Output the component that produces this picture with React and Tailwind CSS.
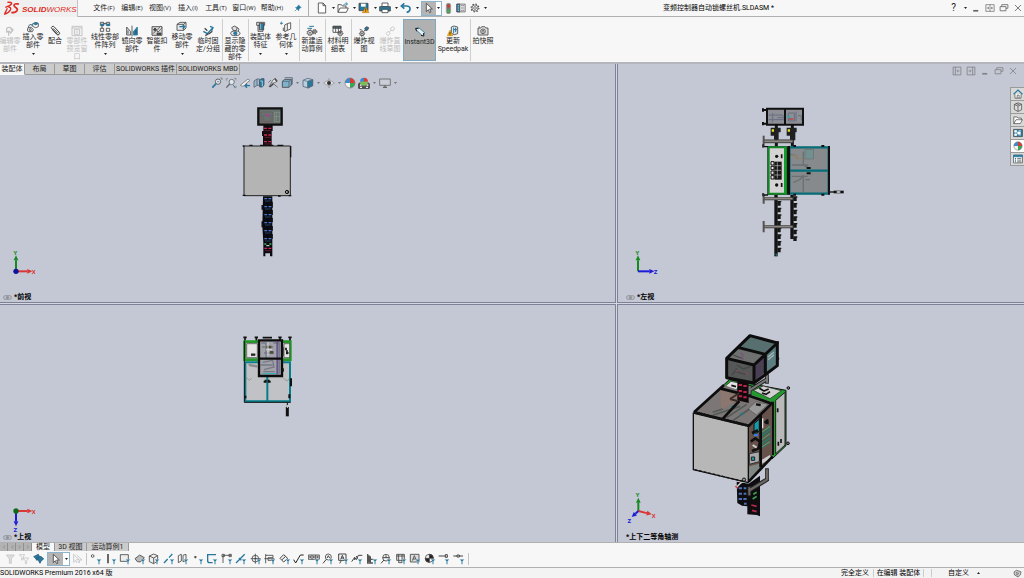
import React, { useState } from "react";

const BLUE = "#27789f";
const DARK = "#444";

/* ---------- icons (drawn on a 36 unit grid) ---------- */

function Icon({ children, className = "size-3" }) {
  return (
    <svg viewBox="0 0 36 36" className={`shrink-0 ${className}`} fill="none" stroke={DARK} strokeWidth="2.5" aria-hidden="true">
      {children}
    </svg>
  );
}

const gear = (x, y, r) => (
  <>
    <circle cx={x} cy={y} r={r} />
    <circle cx={x} cy={y} r={r + 2} strokeDasharray="3 3" />
    <circle cx={x} cy={y} r="2" />
  </>
);

const cursorPath = <path d="M10 4v25l6-6 4 9 4-2-4-9h8z" fill="#fff" />;

const icons = {
  edit: <path d="M8 10q8-6 14 0l5 5-7 9-4-5-8 2zM14 22v10M20 10l5 8" stroke="#c4c4c4" strokeWidth="4" />,
  insert: (
    <>
      <path d="M17 8l10-4 7 3v10l-8 3-9-4z" fill="#fff" />
      <path d="M19 8l8-3 6 3-7 4z" fill={BLUE} stroke={BLUE} />
      <path d="M4 20q0-9 8-10M3 20h11l5 6-3 6H4l-3-5z" />
      <circle cx="10" cy="26" r="3" />
      <path d="M12 10l4 2-4 4" stroke={BLUE} />
    </>
  ),
  mate: <path d="M26 29L9 12q-4-5 0-7 4-3 7 1l14 15q4 5 0 8-4 2-7-1L12 16q-2-4 1-5l14 14" strokeWidth="3" />,
  preview: <path d="M3 4h30v28H3zM3 9h30M10 14h16v14H10zM14 21h8" stroke="#c4c4c4" strokeWidth="3" />,
  pattern: (
    <>
      <path d="M4 4h10v9H4zM22 4h10v9H22zM4 22h10v9H4zM22 22h10v9H22z" />
      <path d="M6 9h8v5H6zM24 9h8v5h-8z" fill={BLUE} stroke={BLUE} />
      <path d="M14 8h8M9 14v8" strokeWidth="3" />
    </>
  ),
  mirror: (
    <>
      <path d="M2 6v24h12V20zM18 2v32" fill="#ddd" />
      <path d="M34 6v24H22V20z" fill={BLUE} stroke={BLUE} />
      <path d="M6 16v10M30 16v10" />
    </>
  ),
  smart: (
    <>
      <path d="M3 5h30v26H3z" fill="#d5d5d5" />
      <path d="M6 26l9-9M17 18l12-14 4 4-12 13z" fill="#fff" />
      <path d="M7 14l5-5 5 5-5 4zM18 24h12v5H18z" fill={DARK} />
    </>
  ),
  move: (
    <>
      <path d="M3 10l9-6h18v17l-7 7H3z" fill="#e8e8e8" />
      <path d="M3 10h20v18M23 10l7-6" />
      <path d="M10 17h14M20 12l6 5-6 6" stroke={BLUE} strokeWidth="4" />
    </>
  ),
  fix: (
    <>
      <path d="M4 19l12 7 16-17M24 4l9 4-4 9" stroke={BLUE} strokeWidth="4" />
      <path d="M8 10l8 7M19 28l12-9M10 32l8-5" strokeWidth="4" />
    </>
  ),
  hide: (
    <>
      <path d="M8 8l8-5 9 5-3 8-8 2z" fill="#ddd" />
      <ellipse cx="19" cy="25" rx="14" ry="7" fill="#eee" />
      <circle cx="19" cy="25" r="5" fill={BLUE} stroke={BLUE} />
      <path d="M23 7l7 5-2 6" />
    </>
  ),
  feature: (
    <>
      <path d="M5 4h24v9H5zM9 13v18h15V13" fill="#ddd" />
      <path d="M13 7h13v19H13z" fill={BLUE} stroke={DARK} />
      <path d="M17 8v17" stroke="#9cc5d9" />
    </>
  ),
  refgeo: (
    <>
      <path d="M14 12l8-4v20l-8 4zM22 8l10-3v19l-10 4" />
      <path d="M4 2v9M0 7h9" stroke={BLUE} />
      <path d="M10 20v10" />
    </>
  ),
  motion: (
    <>
      {gear(12, 23, 7)}
      {gear(26, 20, 5)}
      <path d="M4 10h14M10 4h14" stroke={BLUE} strokeWidth="3" />
    </>
  ),
  bom: (
    <>
      <path d="M3 4h24v18H3zM3 10h24M11 4v18M19 4v18" fill="#fff" />
      <path d="M3 4h24v4H3z" fill={BLUE} />
      {gear(25, 25, 6)}
    </>
  ),
  explode: (
    <>
      {gear(12, 26, 6)}
      <path d="M20 10l6-5 6 3-3 7-6 2z" fill={BLUE} />
      <path d="M17 20l4-5M5 13l8 3" />
    </>
  ),
  explodeOff: <path d="M6 26l6-7 7 6-6 7zM19 10l7-5 6 4-4 8-7-1zM16 21l6-6" stroke="#ccc" strokeWidth="3" />,
  instant: (
    <>
      <path d="M4 9l9-5 20 17-8 8z" fill="#e9f1f5" stroke={BLUE} />
      <path d="M5 7l3 9M5 7l9 1M30 30l-9-2M30 30l-2-9" stroke="#222" strokeWidth="3" />
    </>
  ),
  speedpak: (
    <>
      <path d="M13 6l8-3 11 3v20l-10 3-9-4z" fill="#dfeaf0" />
      <path d="M20 8v17M20 14h10M26 8v13" stroke={BLUE} strokeWidth="3" />
      <path d="M9 15l9 17H1z" fill="#f7b318" stroke="#b77705" strokeWidth="1.5" />
      <path d="M9 21v6M9 28v3" stroke="#222" />
    </>
  ),
  camera: (
    <>
      <path d="M3 9h8l3-4h9l3 4h7v21H3z" fill="#ddd" />
      <circle cx="18" cy="19" r="7" fill="#fff" />
      <circle cx="18" cy="19" r="3" />
      <path d="M5 6h4" />
    </>
  ),
  // quick access
  newDoc: <path d="M7 3h14l8 8v22H7zM21 3v8h8" fill="#fff" />,
  open: (
    <>
      <path d="M3 31V8h10l3 4h11v6M3 31l6-13h25l-6 13z" fill="#fff" />
      <path d="M18 11q4-8 12-5M26 1l6 5-6 4" stroke={BLUE} />
    </>
  ),
  save: (
    <>
      <path d="M3 4h27v22H3z" fill={BLUE} />
      <path d="M9 5h14v9H9z" fill="#fff" stroke="none" />
      <path d="M23 15l10 17H13z" fill="#f7a918" stroke="#a86b05" strokeWidth="1.5" />
      <path d="M23 20v6M23 28v2" stroke="#222" />
    </>
  ),
  print: (
    <>
      <path d="M9 3h18v11H9z" fill="#fff" />
      <path d="M2 14h32v13H2z" fill={BLUE} />
      <path d="M9 22h18v10H9z" fill="#fff" />
    </>
  ),
  undo: <path d="M13 4L4 12l9 8M5 12h16q10 1 9 10-1 7-10 9" stroke={BLUE} strokeWidth="5" />,
  cursor: cursorPath,
  light: (
    <>
      <rect x="11" y="1" width="14" height="34" rx="6" fill="#777" stroke="#999" />
      <circle cx="18" cy="10" r="5" fill="#d8352a" stroke="none" />
      <circle cx="18" cy="26" r="5" fill="#3bb54a" stroke="none" />
    </>
  ),
  list: (
    <>
      <path d="M3 4h30v28H3z" fill="#fff" />
      <path d="M3 4h11v28H3z" fill={BLUE} />
      <path d="M6 10h5M6 18h5M6 26h5" stroke="#fff" />
      <path d="M18 10h12M18 18h12M18 26h12" />
    </>
  ),
  gear: (
    <>
      <circle cx="18" cy="18" r="11" />
      <circle cx="18" cy="18" r="14" strokeDasharray="5 6" strokeWidth="4" />
      <circle cx="18" cy="18" r="5" />
    </>
  ),
  pin: (
    <>
      <path d="M20 4l12 12-4 1-6 7-1 6L7 16l6-1 6-7z" fill={BLUE} stroke={BLUE} />
      <path d="M13 23L4 32" stroke={BLUE} strokeWidth="3" />
    </>
  ),
  // heads-up view toolbar
  zoomFit: (
    <>
      <circle cx="21" cy="14" r="8" fill="#dde9f0" stroke="#666" strokeWidth="3" />
      <path d="M15 20L4 32" stroke={BLUE} strokeWidth="5" />
      <path d="M18 14h7M28 3h5v6" stroke="#777" />
    </>
  ),
  zoomArea: (
    <>
      <path d="M9 5H4v6M27 4h6v6M33 26v6h-6" stroke="#888" />
      <circle cx="20" cy="15" r="8" fill="#dde9f0" stroke="#777" strokeWidth="3" />
      <path d="M14 21L4 32" stroke="#666" strokeWidth="4" />
      <path d="M24 25l7 6" stroke={BLUE} strokeWidth="3" />
    </>
  ),
  prevView: (
    <>
      <path d="M4 25l9-8 14-11 6 4-8 6-9 10-6 2z" fill="#eee" stroke="#777" />
      <path d="M33 26H19M24 20l-6 6 6 6" stroke={BLUE} strokeWidth="4" />
    </>
  ),
  section: (
    <>
      <path d="M3 12l9-6v19l-9 6zM12 6h8v19h-8" fill="#9fb8c8" stroke="#567" />
      <path d="M20 10l5-5h8v19l-5 6h-8z" fill={BLUE} stroke="#456" />
      <path d="M22 12h6v16" stroke="#bdd9e6" />
    </>
  ),
  dynamic: (
    <>
      <path d="M6 30L18 9l7-5 5 6-4 6-11 3zM18 19l14 12M4 17l8-8" fill="#e8e8e8" stroke="#666" />
      <path d="M23 5l7 9M8 30l11-9" strokeWidth="4" />
    </>
  ),
  orient: (
    <>
      <path d="M4 13l7-6h20v17l-7 7H4z" fill="#7fb2cb" />
      <path d="M4 13h20v18M24 13l7-6M11 2h23v20" stroke="#567" />
    </>
  ),
  display: (
    <>
      <path d="M3 10l14-6 15 4v18l-14 7-15-5z" fill="#b5d2e0" stroke="#567" />
      <path d="M17 13l15-5v18l-15 7z" fill={BLUE} stroke="#567" />
      <path d="M3 10l14 3v20" stroke="#678" />
    </>
  ),
  eye: (
    <>
      <path d="M2 18q16-15 32 0-16 15-32 0z" fill="#dfe2e8" stroke="#999" />
      <circle cx="18" cy="18" r="5" fill="#333" />
      <path d="M18 4v5M18 27v6" stroke="#888" />
    </>
  ),
  ball: (
    <>
      <g stroke="none">
        <path d="M18 18V3A15 15 0 0 0 3 18z" fill="#3c8ad0" />
        <path d="M18 18V3a15 15 0 0 1 15 15z" fill="#dc3b32" />
        <path d="M18 18H3a15 15 0 0 0 15 15z" fill="#f4f4f4" />
        <path d="M18 18h15a15 15 0 0 1-15 15z" fill="#35a853" />
      </g>
      <circle cx="18" cy="18" r="15" stroke="#777" strokeWidth="2" />
    </>
  ),
  scene: (
    <>
      <path d="M2 34V20l8-5h17l7 5v14z" fill="#555" stroke="#333" />
      <path d="M6 31h6M24 31h6M6 24h5M26 24h5" stroke="#eee" strokeWidth="4" />
      <path d="M18 14V2A12 12 0 0 0 6 14z" fill="#3c8ad0" stroke="none" />
      <path d="M18 14V2a12 12 0 0 1 12 12z" fill="#dc3b32" stroke="none" />
      <path d="M6 14a12 12 0 0 0 24 0z" fill="#7fbd5b" stroke="none" />
    </>
  ),
  monitor: (
    <>
      <path d="M2 6h32v19H2z" fill="#c9ced8" stroke="#666" />
      <path d="M12 31h12M18 25v6" stroke="#666" strokeWidth="4" />
    </>
  ),
  // window buttons
  min: <path d="M8 28h18" stroke="#666" strokeWidth="6" />,
  tile: <path d="M3 6h30v24H3zM18 6v24M6 18h7M30 18h-7M10 14l4 4-4 4M26 14l-4 4 4 4" stroke="#666" />,
  restore: <path d="M10 13V6h22v13h-7M4 13h21v15H4z" stroke="#666" strokeWidth="3" />,
  close: <path d="M7 7l22 22M29 7L7 29" stroke="#666" strokeWidth="3" />,
  panelL: <path d="M4 4h28v28H4zM12 4v28M27 18h-8M22 13l-5 5 5 5" stroke="#666" strokeWidth="3" />,
  panelR: <path d="M4 4h28v28H4zM24 4v28M9 18h8M14 13l5 5-5 5" stroke="#666" strokeWidth="3" />,
  // task pane
  home: (
    <>
      <path d="M7 18v15h22V18" fill="#fff" />
      <path d="M2 19L18 4l16 15" stroke={BLUE} strokeWidth="4" />
      <path d="M15 33V22h7v11" />
    </>
  ),
  library: <path d="M5 9l13-6 13 5v20l-13 6-13-7zM5 9l13 6v19M18 15l13-7M10 5l14 6" fill="#ddd" />,
  folder: <path d="M3 31V7h11l4 4h12v6M3 31l8-14h23l-8 14z" fill="#fff" />,
  palette: (
    <>
      <path d="M2 5h32v26H2z" fill={BLUE} />
      <path d="M6 9h7v6H6zM20 10h9M6 21h7v6H6zM20 25h9M17 14h9v8h-9z" fill="#fff" stroke="#fff" />
    </>
  ),
  props: (
    <>
      <path d="M2 4h32v28H2z" fill="#fff" />
      <path d="M2 4h32v6H2z" fill={BLUE} stroke={BLUE} />
      <path d="M7 16h4M7 22h4M7 28h4" stroke={BLUE} strokeWidth="4" />
      <path d="M15 16h15M15 22h15M15 28h15" />
    </>
  ),
};

/* selection filter glyphs, each one carries a small funnel */
const filterGlyphs = [
  ["过滤顶点", <circle cx="8" cy="9" r="4" />],
  ["过滤边线", <path d="M9 3v28" stroke="#222" strokeWidth="4" />],
  ["过滤面", <path d="M4 5h24v20H4z" fill="#eee" />],
  ["过滤曲面实体", <path d="M3 17L17 6l14 8-12 13-9-1z" fill="#bbb" />],
  ["过滤实体", <path d="M4 9l13-6 12 5v16l-12 8-13-6zM4 9l13 6v16M17 15l12-7" fill="#eee" />],
  ["过滤基准轴", <path d="M3 30L14 18M18 14L28 3" stroke={BLUE} strokeWidth="4" />],
  ["过滤基准面", <path d="M4 8l9-4v20l-9 5zM18 7l9-3v19l-9 3z" />],
  ["过滤草图点", <path d="M10 9v7M6 12h8" strokeWidth="3" />],
  ["过滤草图", <path d="M30 5H5v18q0 6 6 6h9" stroke={BLUE} strokeWidth="4" />],
  ["过滤草图线段", <path d="M6 30V7h24M3 4h7v7H3zM24 4h7v7h-7z" />],
  ["过滤中间点", <path d="M3 30L29 4M12 15l7 7" stroke={BLUE} strokeWidth="4" />],
  ["过滤中心符号线", <><circle cx="16" cy="17" r="10" /><path d="M16 2v30M2 17h30M12 17h8" /></>],
  ["过滤中心线", <path d="M5 3v28M5 7h22v7H12v8h15v6M1 17h30" />],
  ["过滤尺寸", <path d="M3 16L14 5l12 11-12 11zM9 20l11-10" strokeWidth="3" />],
  ["过滤表面粗糙度", <path d="M2 20l6 10L22 6h10" stroke="#222" strokeWidth="3" />],
  ["过滤形位公差", <><path d="M1 6h33v13H1zM12 6v13M23 6v13" fill="#ddd" /><path d="M4 12h5M15 12h5M26 12h5" strokeWidth="4" /></>],
  ["过滤注释", <><circle cx="19" cy="12" r="9" /><path d="M13 19L3 31M15 15l4-7 4 7" strokeWidth="3" /></>],
  ["过滤基准特征", <path d="M5 3h22v19H5zM11 19l5-12 5 12M12 15h8M8 31l5-8" strokeWidth="3" />],
  ["过滤焊接符号", <path d="M2 26l9-13 5 7 6-13h12M11 13v8M16 9l4 8" strokeWidth="3" />],
  ["过滤焊缝", <path d="M5 3v27h16M5 12h8v18M13 19h9M9 7v20" stroke="#555" strokeWidth="4" />],
  ["过滤基准目标", <><circle cx="18" cy="14" r="10" /><path d="M8 14h20M12 21L3 31M18 7v7" strokeWidth="3" /></>],
  ["过滤装饰螺纹线", <path d="M5 4h23v18H5zM11 4v25h10V4M5 9h23" fill="#ddd" />],
  ["过滤块", <path d="M4 4h26v23H4zM10 23l6-15 7 15M12 18h8" fill="#ddd" />],
  ["过滤销钉符号", <><circle cx="16" cy="16" r="12" fill="#fff" /><path d="M16 16V4a12 12 0 0 1 12 12zM16 16v12A12 12 0 0 1 4 16z" fill="#222" /></>],
  ["过滤连接点", <path d="M2 9h20M22 5v8h6V5z" strokeWidth="3" />],
  ["过滤步路点", <path d="M1 9h11M18 9h12M12 6h7v6h-7z" strokeWidth="3" />],
];

const ribbonGroups = [
  [
    { label: "编辑零\n部件", icon: "edit", w: "w-5", off: true },
    { label: "插入零\n部件", icon: "insert", w: "w-[26px]", menu: true },
    { label: "配合", icon: "mate", w: "w-[18px]" },
    { label: "零部件\n预览窗\n口", icon: "preview", w: "w-[26px]", off: true },
    { label: "线性零部\n件阵列", icon: "pattern", w: "w-[30px]", menu: true },
    { label: "镜向零\n部件", icon: "mirror", w: "w-6" },
    { label: "智能扣\n件", icon: "smart", w: "w-[26px]" },
    { label: "移动零\n部件", icon: "move", w: "w-6", menu: true },
    { label: "临时固\n定/分组", icon: "fix", w: "w-7" },
  ],
  [{ label: "显示隐\n藏的零\n部件", icon: "hide", w: "w-[26px]" }],
  [
    { label: "装配体\n特征", icon: "feature", w: "w-[25px]", menu: true },
    { label: "参考几\n何体", icon: "refgeo", w: "w-[26px]", menu: true },
  ],
  [{ label: "新建运\n动算例", icon: "motion", w: "w-[26px]" }],
  [{ label: "材料明\n细表", icon: "bom", w: "w-[26px]" }],
  [
    { label: "爆炸视\n图", icon: "explode", w: "w-[26px]" },
    { label: "爆炸直\n线草图", icon: "explodeOff", w: "w-[26px]", off: true },
    { label: "Instant3D", icon: "instant", w: "w-[33px]", active: true },
    { label: "更新\nSpeedpak", icon: "speedpak", w: "w-[34px]" },
  ],
  [{ label: "拍快照", icon: "camera", w: "w-[26px]" }],
];

const menus = [["文件", "F"], ["编辑", "E"], ["视图", "V"], ["插入", "I"], ["工具", "T"], ["窗口", "W"], ["帮助", "H"]];

const tabs = [
  ["装配体", "w-[25px]"],
  ["布局", "w-[30px]"],
  ["草图", "w-[30px]"],
  ["评估", "w-[30px]"],
  ["SOLIDWORKS 插件", "w-[62px]"],
  ["SOLIDWORKS MBD", "w-[63px]"],
];

function Caret({ className = "" }) {
  return (
    <svg viewBox="0 0 9 6" className={`h-[2px] w-[3px] shrink-0 ${className}`} aria-hidden="true">
      <path d="M0 0h9L4.500 6z" fill="#222" />
    </svg>
  );
}

/* ---------- title bar ---------- */

function Logo() {
  return (
    <div className="flex h-[18px] w-[78px] shrink-0 items-center gap-[2px] self-start border-r border-b border-[#c4c4c4] bg-[#f0f0f0] pl-1">
      <svg viewBox="0 0 48 45" className="h-[15px] w-4 shrink-0" fill="none" stroke="#dd2a22" aria-hidden="true">
        <path d="M10 4q14-1 13 4-3 6-19 11" strokeWidth="4" />
        <path d="M13 18q10 1 6 9-4 9-17 12l8-17" strokeWidth="4" />
        <path d="M45 9q-15-2-15 4 0 4 6 7t3 9q-4 6-17 6" strokeWidth="5" />
      </svg>
      <span className="pt-[2px] font-['Liberation_Sans',sans-serif] text-[8px] leading-[10px] text-[#dd2a22] italic">
        <b>SOLID</b>WORKS
      </span>
    </div>
  );
}

function TitleBar() {
  const quick = ["newDoc", "open", "save", "print", "undo"];
  return (
    <header className="flex h-[17px] shrink-0 items-center border-b border-[#b0b0b0] bg-[#f7f7f7]">
      <Logo />
      <nav className="flex pl-3">
        {menus.map(([name, key]) => (
          <button key={key} className="w-7 text-center whitespace-nowrap">
            {name}<span className="text-[6px]">({key})</span>
          </button>
        ))}
      </nav>
      <button aria-label="固定菜单" className="ml-1 flex w-4 justify-center"><Icon className="size-2">{icons.pin}</Icon></button>
      <div className="ml-[2px] flex h-4 items-center border-l border-[#b0b0b0] pl-[7px]">
        {quick.map((name) => (
          <button key={name} aria-label={name} className="flex w-[21px] items-center gap-1">
            <Icon>{icons[name]}</Icon>
            <Caret />
          </button>
        ))}
        <button aria-label="选择" className="flex h-[15px] w-[21px] items-center border border-[#8cb4cc] bg-white">
          <span className="flex h-full w-[14px] items-center justify-center bg-[#b5b5b5]"><Icon>{icons.cursor}</Icon></span>
          <Caret className="ml-[1px]" />
        </button>
        <div className="flex items-center gap-[2px] pl-[1px]">
          <button aria-label="重建模型"><Icon className="size-[11px]">{icons.light}</Icon></button>
          <button aria-label="文件属性"><Icon className="size-[10px]">{icons.list}</Icon></button>
          <button aria-label="选项" className="flex items-center gap-1 pl-[2px]"><Icon className="size-[10px]">{icons.gear}</Icon><Caret /></button>
        </div>
      </div>
      <h1 className="flex-1 pl-[150px] text-center whitespace-nowrap text-black">变频控制器自动锁螺丝机.SLDASM *</h1>
      <div className="flex w-[224px] shrink-0 items-center justify-end gap-1 pr-[1px]">
        <button className="pr-1 text-[10px] leading-[12px]" aria-label="帮助">?</button>
        <Caret />
        <button aria-label="最小化"><Icon className="size-[10px]">{icons.min}</Icon></button>
        <button aria-label="平铺"><Icon className="size-[10px]">{icons.tile}</Icon></button>
        <button aria-label="还原"><Icon className="size-[10px]">{icons.restore}</Icon></button>
        <button aria-label="关闭"><Icon className="size-[10px]">{icons.close}</Icon></button>
      </div>
    </header>
  );
}

/* ---------- ribbon ---------- */

function RibbonButton({ item }) {
  return (
    <button
      disabled={item.off}
      className={`flex h-full shrink-0 flex-col items-center ${item.w} ${item.menu ? "pt-[2px]" : "pt-[6px]"} ${
        item.active ? "border border-[#7ea9c2] bg-[#b1b1b1]" : ""
      } ${item.off ? "text-[#bdbdbd]" : "text-[#222]"}`}
    >
      <Icon>{icons[item.icon]}</Icon>
      <span className="text-center whitespace-pre">{item.label}</span>
      {item.menu && <Caret className="mt-1" />}
    </button>
  );
}

function Ribbon() {
  return (
    <div className="flex h-[47px] shrink-0 border-b-2 border-[#b4b6bb] bg-[#f7f7f7] pt-[2px] pb-[1px]">
      {ribbonGroups.map((group, i) => (
        <div key={i} className="flex shadow-[1px_0_0_#cfcfcf] last:shadow-none">
          {group.map((item) => (
            <RibbonButton key={item.label} item={item} />
          ))}
        </div>
      ))}
    </div>
  );
}

function CommandTabs() {
  const [active, setActive] = useState(0);
  return (
    <div role="tablist" className="relative flex h-[11px]">
      {tabs.map(([name, w], i) => (
        <button
          key={name}
          role="tab"
          aria-selected={i === active}
          onClick={() => setActive(i)}
          className={`shrink-0 border-r border-b border-[#999] text-center leading-[9px] whitespace-nowrap ${w} ${
            i === active ? "border-b-[#f7f7f7] bg-[#f7f7f7]" : "bg-[#cbcbcb]"
          }`}
        >
          {name}
        </button>
      ))}
    </div>
  );
}

function HeadsUpToolbar() {
  const plain = ["zoomFit", "zoomArea", "prevView", "section", "dynamic"];
  return (
    <div className="relative flex items-center pt-[2px] pl-[211px]">
      {plain.map((name) => (
        <button key={name} aria-label={name} className="w-[14px]"><Icon>{icons[name]}</Icon></button>
      ))}
      {["orient", "display", "eye"].map((name) => (
        <button key={name} aria-label={name} className="flex w-[21px] items-center gap-[3px]"><Icon>{icons[name]}</Icon><Caret className="opacity-50" /></button>
      ))}
      <button aria-label="编辑外观" className="w-[14px]"><Icon>{icons.ball}</Icon></button>
      {["scene", "monitor"].map((name) => (
        <button key={name} aria-label={name} className="flex w-[21px] items-center gap-[3px]"><Icon>{icons[name]}</Icon><Caret className="opacity-50" /></button>
      ))}
    </div>
  );
}

/* ---------- viewports ---------- */

// rows of small coloured clips along a black feeder column
function Clips({ x, y, w, rows, step, color }) {
  return Array.from({ length: rows }, (_, i) => (
    <g key={i} stroke={color} strokeWidth="4">
      <path d={`M${x} ${y + i * step}h${w / 2 - 2}m4 0h${w / 2 - 2}`} />
      <path d={`M${x + 2} ${y + i * step + 7}h${w - 4}`} strokeWidth="2" opacity="0.7" />
    </g>
  ));
}

function FrontModel() {
  return (
    <svg viewBox="0 0 420 540" className="absolute top-[26px] left-[200px] h-[180px] w-[140px]" fill="none" aria-hidden="true">
      <path d="M190 105h28v18h-3v45h-26v-30h-3v-15h4z" fill="#150a0e" />
      <Clips x={192} y={115} w={22} rows={3} step={20} color="#c32b54" />
      <path d="M175 55h70v49h-70z" fill="#66736f" stroke="#111" strokeWidth="7" />
      <path d="M184 66h34v30h-34zM190 76h22v18h-22z" stroke="#775a5e" strokeWidth="2" />
      <path d="M199 72h8v8h-8z" fill="#a2459b" />
      <path d="M223 67h16v28h-16zM223 80h16M229 70v22" stroke="#87988f" strokeWidth="2" />
      <path d="M132 168h139v149H132z" fill="#b4b4b4" stroke="#222" strokeWidth="3" />
      <path d="M148 166h10M180 166h40M232 166h18M272 168v34M234 318h8M128 168h5M128 316h9M266 317h8" stroke="#111" strokeWidth="4" />
      <circle cx="261" cy="306" r="5" stroke="#111" strokeWidth="3" />
      <path d="M260 306h5" stroke="#111" strokeWidth="3" />
      <path d="M189 319h28v180h-7v-9h-14v9h-6v-40l-3-50z" fill="#0a0b10" />
      <path d="M216 335v18M216 360v15M216 383v14M216 408v14M216 432v14M187 394v18M187 345v14" stroke="#111" strokeWidth="5" />
      <Clips x={193} y={326} w={21} rows={6} step={24} color="#4a78cf" />
      <path d="M193 462h6m9 0h6" stroke="#3fc057" strokeWidth="4" />
      <path d="M199 467h9" stroke="#eee" strokeWidth="3" />
      <Clips x={193} y={475} w={21} rows={1} step={9} color="#cf2a58" />
    </svg>
  );
}

function LeftModel() {
  const nubs = (x, y, n) => Array.from({ length: n }, (_, i) => (
    <path key={i} d={`M${x} ${y + i * 20}h12v4h-2v10h-10z`} fill="#161616" />
  ));
  return (
    <svg viewBox="0 0 360 510" className="absolute top-[31px] left-[122px] h-[170px] w-[120px]" fill="none" aria-hidden="true">
      <path d="M109 90v65M157 90v65" stroke="#151515" strokeWidth="9" />
      <path d="M92 98h30v14h-6v22h-14v-12H92zM140 98h30v14h-4v24h-16v-14h-10z" fill="#202020" />
      <path d="M95 103h7v7h-7zM143 103h7v7h-7z" fill="#e9df22" />
      <path d="M81 41h108v48H81z" fill="#8f8f97" />
      <path d="M86 60h40l8 6M86 74h46M98 54v28M112 68h20M145 54h18v24h-18zM168 50v30M174 62h10v14" stroke="#676f80" strokeWidth="3" />
      <path d="M141 62h10v8h-10z" fill="#3fa0a5" />
      <path d="M146 72h14" stroke="#b84c4c" strokeWidth="5" />
      <path d="M81 41h108v48H81zM135 41v48M69 45h12M69 86h12M69 40v10M69 81v10" stroke="#101010" strokeWidth="6" />
      <path d="M72 139h86" stroke="#333" strokeWidth="11" />
      <path d="M72 139h86" stroke="#8b8784" strokeWidth="6" />
      <path d="M71 122v34" stroke="#56514e" strokeWidth="6" />
      <path d="M108 300v184" stroke="#141414" strokeWidth="10" />
      <path d="M156 300v132" stroke="#141414" strokeWidth="10" />
      {nubs(112, 318, 8)}
      {nubs(160, 304, 7)}
      <path d="M72 311h86M72 395h86" stroke="#333" strokeWidth="9" />
      <path d="M72 311h86M72 395h86" stroke="#8b8784" strokeWidth="5" />
      <path d="M71 296v30M71 378v34" stroke="#56514e" strokeWidth="6" />
      <path d="M105 476l4 8 5-8" fill="#1b756c" />
      <path d="M148 155h118v143H148z" fill="#868a8c" />
      <path d="M150 178q25 4 22 14M196 165h24v26h-24zM155 210h50M190 170v40l18 10M155 244h48M160 262q24-8 28-20M190 240v50M196 254h14" stroke="#6b7071" strokeWidth="4" />
      <path d="M196 165h24v26h-24z" fill="#72908f" />
      <path d="M153 182l18 3q6 10 14 8" stroke="#95866c" strokeWidth="5" />
      <path d="M148 157h118v139H148zM148 227h116" stroke="#066d79" strokeWidth="7" />
      <path d="M267 153v146M147 153v146M160 153h8M244 153h9M244 299h9M160 299h8M200 219h12M200 235h12" stroke="#111" strokeWidth="6" />
      <path d="M82 154h62v145H82z" fill="#141414" />
      <path d="M86 157h52v139H86z" fill="#d4d4d4" stroke="#128527" strokeWidth="6" />
      <path d="M135 157v139" stroke="#129e2c" strokeWidth="6" />
      <circle cx="110" cy="184" r="5" fill="#111" />
      <circle cx="110" cy="270" r="5" fill="#111" />
      <path d="M125 178v12M125 264v12" stroke="#111" strokeWidth="5" />
      <path d="M93 200h9v10h-9zM93 214h9v10h-9zM93 228h9v10h-9zM93 242h9v10h-9z" fill="#eee" stroke="#111" strokeWidth="3" />
      <path d="M103 200h22v54h-22z" fill="#151515" />
      <path d="M105 212h18M105 226h18M105 240h18M112 202v48" stroke="#bbb" strokeWidth="2" />
      <path d="M72 155h12M72 300h12M69 148v10M69 294v10" stroke="#111" strokeWidth="4" />
      <path d="M268 291h42" stroke="#111" strokeWidth="4" />
      <path d="M281 291h30" stroke="#111" strokeWidth="8" />
      <path d="M290 291h11" stroke="#ccc" strokeWidth="5" />
    </svg>
  );
}

function TopModel() {
  return (
    <svg viewBox="0 0 300 300" className="absolute top-[20px] left-[220px] h-[100px] w-[100px]" fill="none" aria-hidden="true">
      <path d="M75 36v14M109 36v14M180 36v14M210 36v14M70 37h10M104 37h10M175 37h10M205 37h10M128 38h28" stroke="#111" strokeWidth="5" />
      <path d="M74 50h137v54H74z" fill="#ddd" stroke="#249529" strokeWidth="8" />
      <path d="M80 56h32v42H80zM192 56h17v42h-17z" fill="#e4e4e4" stroke="#333" strokeWidth="2" />
      <path d="M93 89h13" stroke="#222" strokeWidth="7" />
      <path d="M198 68v8M198 84h8M201 76v12" stroke="#111" strokeWidth="5" />
      <path d="M76 110h134v120H76z" fill="#c1c2c5" />
      <path d="M84 116l28 4v8l-24-4z" fill="#8c8c90" />
      <path d="M80 158l8 8 7-6M190 160l12 8 6-8" stroke="#999" strokeWidth="3" />
      <path d="M76 112h134v117H76zM142 150v80" stroke="#067d8b" strokeWidth="6" />
      <path d="M73 48v184h139" stroke="#111" strokeWidth="3" />
      <path d="M131 170h6v-6M152 170h-6v-6M76 212v8M208 208v12M213 160v24" stroke="#111" strokeWidth="6" />
      <path d="M117 46h69v107h-69z" fill="#a2a2ab" />
      <path d="M124 54h14v46M160 54h18v92M128 112l30-6 4 20-30 8M126 66h34M132 84h30M122 120h36M130 140h34" stroke="#777b86" strokeWidth="4" />
      <path d="M172 50v98" stroke="#66588e" strokeWidth="6" />
      <path d="M140 62h14v8h-14zM150 78h10v8h-10z" fill="#4b4f37" />
      <path d="M138 74h18M144 52v40" stroke="#dadada" strokeWidth="3" />
      <path d="M128 146h40" stroke="#2db3b8" strokeWidth="3" />
      <path d="M117 46h69v107h-69zM117 101h69" stroke="#0b0b0b" strokeWidth="7" />
      <path d="M188 66v26M189 130v10" stroke="#111" strokeWidth="5" />
      <path d="M202 232v18" stroke="#111" strokeWidth="3" />
      <path d="M202 246v28" stroke="#111" strokeWidth="9" />
      <path d="M202 240v9" stroke="#ddd" strokeWidth="3" />
    </svg>
  );
}

function IsoModel() {
  return (
    <svg viewBox="0 0 420 600" className="absolute top-[20px] left-[52px] h-[200px] w-[140px]" fill="none" strokeLinejoin="round" aria-hidden="true">
      {/* feeder legs */}
      <path d="M200 470l36 6 34-24v122l-10-4-28-2v-24l-16-2-14-8z" fill="#0d0d10" />
      <path d="M206 490h10m5 0h8M206 506h10m5 0h8M206 522h10m4 0h10M222 536h8" stroke="#4d6fb5" strokeWidth="6" />
      <path d="M250 508l10-6M248 522l12-8" stroke="#3aa358" strokeWidth="5" />
      <path d="M244 540l16 4M246 556l14 4" stroke="#b7284f" strokeWidth="5" />
      <path d="M234 498l60-36" stroke="#222" strokeWidth="13" />
      <path d="M238 484v30M291 430v38" stroke="#222" strokeWidth="11" />
      <path d="M236 497l56-34" stroke="#6b6765" strokeWidth="7" />
      <path d="M238 487v24M291 433v32" stroke="#6b6765" strokeWidth="6" />
      <path d="M196 490l16-16 10-8" stroke="#ccc" strokeWidth="5" />
      <path d="M196 484l8 6" stroke="#cc3434" strokeWidth="4" />

      {/* green side cabinet */}
      <path d="M152 188l26-24 170 32v166l-42 40z" fill="#209a2c" stroke="#111" strokeWidth="3" />
      <path d="M163 186l20-17 28 6-12 20z" fill="#e4e4e4" stroke="#222" strokeWidth="2" />
      <path d="M250 196l30-13 54 14-34 24z" fill="#d0d0d0" stroke="#222" strokeWidth="2" />
      <path d="M268 190l14 8 14-6M276 204l12 4 12-8" stroke="#111" strokeWidth="5" />
      <path d="M184 181l14 4" stroke="#111" strokeWidth="5" />
      <path d="M317 226l28-24v158l-28 26z" fill="#b9b9b9" stroke="#222" strokeWidth="3" />
      <path d="M323 250v12M325 350v12M333 342v12" stroke="#111" strokeWidth="5" />
      <path d="M308 230v160" stroke="#111" strokeWidth="8" />
      <circle cx="355" cy="189" r="4" fill="#777" stroke="#111" strokeWidth="3" />
      <circle cx="354" cy="355" r="4" fill="#777" stroke="#111" strokeWidth="3" />

      {/* main cabinet */}
      <path d="M72 262l90-82 146 52-72 70z" fill="#7c7776" />
      <path d="M150 192l4 62 80-48z" fill="#8b7770" />
      <path d="M234 252l24-22 36 8-34 32z" fill="#999" stroke="#555" strokeWidth="2" />
      <path d="M258 238l14 2" stroke="#111" strokeWidth="7" />
      <path d="M130 270l80-26M170 278l60-40M190 286l48-34M128 262l30-10" stroke="#525a58" strokeWidth="5" />
      <path d="M184 246l8-4M210 270l8-6" stroke="#1b7b83" strokeWidth="5" />
      <path d="M236 302l70-68v160l-70 76z" fill="#66524a" />
      <path d="M252 296l16-14v36l-16 12z" fill="#149aa8" stroke="#111" strokeWidth="3" />
      <path d="M270 286l10-8v30l-10 6z" fill="#e0e0e0" />
      <path d="M274 324l28-22M274 334l28-22M274 346l28-22M274 358l28-20M274 368l28-18" stroke="#2d7566" strokeWidth="6" />
      <path d="M272 324l28-20M272 346l28-20M272 368l28-18" stroke="#a3a05a" strokeWidth="2" />
      <path d="M284 294l8-8v12M246 324l18-8M242 350l14-10 14 10-4 20-20 8" stroke="#111" strokeWidth="8" />
      <path d="M252 330h12" stroke="#3c7ae0" strokeWidth="7" />
      <path d="M248 360l12 8" stroke="#ccc" strokeWidth="6" />
      <path d="M238 386l30-6v30l-30 8z" fill="#aaa" stroke="#333" strokeWidth="3" />
      <path d="M244 396h10v10h-10z" fill="#1ba1a6" stroke="#222" strokeWidth="3" />
      <path d="M238 424l30-8v26l-32 28z" fill="#818784" />
      <path d="M270 414l32-20" stroke="#ccc" strokeWidth="10" />
      <path d="M72 262l90-82M72 262l164 41 72-70M156 284l52-56M150 190l86 22 70 24M308 394l-72 76M272 270v156" stroke="#0d0d0d" strokeWidth="8" />
      <path d="M70 264l165 40v169L70 434z" fill="#b7b7b7" stroke="#111" strokeWidth="4" />
      <path d="M74 262l162 40" stroke="#111" strokeWidth="8" strokeDasharray="7 2" />
      <path d="M74 434l150 36" stroke="#111" strokeWidth="4" strokeDasharray="8 6" />
      <circle cx="222" cy="464" r="5" fill="#999" stroke="#111" strokeWidth="3" />

      {/* neck */}
      <path d="M202 164l34 6v64l-34-8z" fill="#13090d" />
      <path d="M206 180h10m4 3h10M206 198h10m4 3h10M206 214h10m4 3h10" stroke="#b52748" strokeWidth="6" />
      <path d="M180 222l28-18M180 222l22 6" stroke="#3a2c28" strokeWidth="6" />
      <path d="M236 197l58-36" stroke="#222" strokeWidth="12" />
      <path d="M239 180v30M291 148v28" stroke="#222" strokeWidth="11" />
      <path d="M238 196l54-34" stroke="#777" strokeWidth="6" />
      <path d="M239 183v24M291 151v22" stroke="#777" strokeWidth="6" />

      {/* top box */}
      <path d="M170 100l70-68 82 22v70l-70 52-82-16z" fill="#6e7170" />
      <path d="M210 70l30-36 78 20-32 32z" fill="#57706f" />
      <path d="M290 88l28-28v60l-28 22z" fill="#5b7f80" />
      <path d="M174 102l76 18v50l-76-14z" fill="#565858" />
      <path d="M254 118l30-26v50l-28 24z" fill="#4b3c57" />
      <path d="M200 120l20 12 22-8M196 140l30 8M190 90l30 12M186 150l14-20M262 126l14-10v24l-12 8" stroke="#444848" strokeWidth="4" />
      <path d="M210 84l8 4-2 16" stroke="#7d5579" strokeWidth="5" />
      <path d="M196 136l8 4M226 142l8 6" stroke="#884a5a" strokeWidth="4" />
      <path d="M294 96l18-14M294 104l18-14" stroke="#a5b6b6" strokeWidth="4" />
      <path d="M170 100l70-68 82 22-70 66zM170 100v58l82 16v-54M252 174l70-52V54M206 68l80 20v58" stroke="#0d0d0d" strokeWidth="9" />
      <circle cx="323" cy="52" r="4" fill="#111" />
      <circle cx="324" cy="101" r="4" fill="#111" />
    </svg>
  );
}

function Axis({ from, to, label, at, color }) {
  const [x, y] = from;
  const [tx, ty] = to;
  const len = Math.hypot(tx - x, ty - y);
  const ux = (tx - x) / len;
  const uy = (ty - y) / len;
  const bx = tx - ux * 15;
  const by = ty - uy * 15;
  return (
    <g fill={color}>
      <path d={`M${x} ${y}L${bx} ${by}`} stroke={color} strokeWidth="6" />
      <path d={`M${tx} ${ty}L${bx - uy * 7} ${by + ux * 7}L${bx + uy * 7} ${by - ux * 7}z`} />
      <text x={at[0]} y={at[1]} fontSize="18" fontWeight="bold" textAnchor="middle" dominantBaseline="central">{label}</text>
    </g>
  );
}

const GREEN = "#168a22";
const RED = "#d93636";
const NAVY = "#1c1cd6";

function Triad({ className, origin, axes, dot }) {
  return (
    <svg viewBox="0 0 120 108" className={`absolute h-9 w-10 ${className}`} aria-hidden="true">
      {axes.map((a) => (
        <Axis key={a.label} from={origin} {...a} />
      ))}
      {dot && <circle cx={origin[0]} cy={origin[1]} r="8" fill={dot} />}
    </svg>
  );
}

function ViewCaption({ children, linked = true, className = "left-[3px]" }) {
  return (
    <figcaption className={`absolute bottom-[1px] flex items-center gap-[2px] text-[7px] leading-[8px] font-bold text-black ${className}`}>
      {linked && (
        <svg viewBox="0 0 27 15" className="h-[5px] w-[9px]" fill="none" stroke="#8d8f95" strokeWidth="3" aria-hidden="true">
          <rect x="2" y="2" width="14" height="11" rx="5" />
          <rect x="11" y="2" width="14" height="11" rx="5" />
          <path d="M8 8h11" />
        </svg>
      )}
      <span>*{children}</span>
    </figcaption>
  );
}

function Viewports() {
  const pane = "relative min-h-0 min-w-0 overflow-hidden bg-[#c4c8d4] border-[#7f8296]";
  return (
    <main className="grid min-h-0 flex-1 grid-cols-[616fr_407fr] grid-rows-[239fr_238fr] gap-px bg-[#d5d8e2]">
      <section className={`${pane} border-r border-b`}>
        <figure>
          <FrontModel />
          <Triad
            className="bottom-[18px] left-[10px]"
            origin={[18, 70]}
            dot="#10109c"
            axes={[
              { to: [18, 22], label: "Y", at: [16, 13], color: GREEN },
              { to: [67, 70], label: "X", at: [71, 70], color: RED },
            ]}
          />
          <ViewCaption>前视</ViewCaption>
        </figure>
        <CommandTabs />
        <HeadsUpToolbar />
      </section>

      <section className={`${pane} border-b border-l`}>
        <figure>
          <LeftModel />
          <Triad
            className="bottom-[18px] left-[14px]"
            origin={[18, 70]}
            axes={[
              { to: [18, 22], label: "Y", at: [16, 13], color: GREEN },
              { to: [67, 70], label: "Z", at: [71, 70], color: NAVY },
            ]}
          />
          <ViewCaption className="left-2">左视</ViewCaption>
        </figure>
        <div className="relative flex justify-end gap-1 pt-[2px] pr-[6px]">
          {[["panelL", "左窗格"], ["panelR", "右窗格"], ["min", "最小化"], ["restore", "还原"], ["close", "关闭"]].map(([name, label]) => (
            <button key={name} aria-label={label} className="opacity-70"><Icon className="size-[10px]">{icons[name]}</Icon></button>
          ))}
        </div>
        <aside className="absolute top-[23px] right-0 flex flex-col border-t border-l border-[#9a9a9a]">
          {["home", "library", "folder", "palette", "ball", "props"].map((name) => (
            <button
              key={name}
              aria-label={name}
              className={`flex h-[13px] w-[13px] items-center justify-center border-b border-[#9a9a9a] ${name === "ball" ? "bg-white" : "bg-[#d8d8d8]"}`}
            >
              <Icon className="size-[10px]">{icons[name]}</Icon>
            </button>
          ))}
        </aside>
      </section>

      <section className={`${pane} border-t border-r`}>
        <figure>
          <TopModel />
          <Triad
            className="bottom-[5px] left-[10px]"
            origin={[18, 30]}
            dot="#0d6b16"
            axes={[
              { to: [67, 30], label: "X", at: [71, 30], color: RED },
              { to: [18, 76], label: "Z", at: [16, 86], color: NAVY },
            ]}
          />
          <ViewCaption>上视</ViewCaption>
        </figure>
      </section>

      <section className={`${pane} border-t border-l`}>
        <figure>
          <IsoModel />
          <Triad
            className="bottom-[15px] left-[7px]"
            origin={[40, 60]}
            axes={[
              { to: [40, 20], label: "Y", at: [38, 11], color: GREEN },
              { to: [80, 70], label: "X", at: [86, 74], color: RED },
              { to: [20, 78], label: "Z", at: [13, 87], color: NAVY },
            ]}
          />
          <ViewCaption linked={false} className="left-2">上下二等角轴测</ViewCaption>
        </figure>
      </section>
    </main>
  );
}

/* ---------- bottom bars ---------- */

function SheetTabs() {
  return (
    <div className="flex h-[9px] shrink-0 border-t border-[#b0b0b0] bg-[#f7f7f7] leading-[8px]">
      <div className="flex bg-[#b3b3b3]">
        {["M22 8v20L10 18z", "M24 8v20L12 18z", "M12 8v20l12-10z", "M14 8v20l12-10z"].map((d, i) => (
          <button key={d} aria-label={`标签滚动 ${i + 1}`} className="flex w-2 items-center justify-center border-r border-[#8f8f8f]">
            <Icon className="size-[6px]"><path d={d} stroke="#8a8a8a" /></Icon>
          </button>
        ))}
      </div>
      <button className="w-[23px] border-r border-[#999] bg-[#f7f7f7] text-center">模型</button>
      <button className="w-8 border-r border-[#999] bg-[#cbcbcb] text-center whitespace-nowrap">3D 视图</button>
      <button className="w-[42px] border-r border-[#999] bg-[#cbcbcb] text-center whitespace-nowrap">运动算例1</button>
    </div>
  );
}

function FilterToolbar() {
  return (
    <div className="flex h-[17px] shrink-0 items-center border-b border-[#b0b0b0] bg-[#f7f7f7] pl-1">
      <button aria-label="切换过滤器" className="w-[14px]"><Icon><path d="M7 6h24l-9 11v14h-6V17z" stroke="#c6c6c6" fill="#ddd" /></Icon></button>
      <button aria-label="清除过滤器" className="w-[15px]"><Icon><path d="M4 5h16l-5 8v8h-4v-8zM15 15h17l-6 8v9h-4v-9z" stroke="#c6c6c6" /></Icon></button>
      <button aria-label="选择所有过滤器" className="w-[14px]">
        <Icon><path d="M2 11L16 4l4 7-6 6-3 5-3-6zM10 17l14-7 8 8-7 5-4 8-4-7z" fill={BLUE} stroke="#2b5e78" /></Icon>
      </button>
      <button aria-label="选择" className="flex h-[14px] w-[23px] items-center border border-[#8cb4cc] bg-white">
        <span className="flex h-full w-[15px] items-center justify-center bg-[#b5b5b5]"><Icon>{icons.cursor}</Icon></span>
        <Caret className="ml-[2px]" />
      </button>
      <button aria-label="反转选择" className="flex w-4 justify-center">
        <Icon><path d="M5 4v24l6-6 4 8M5 4l16 16h-8M14 6l16 15h-8v9l-5-5" stroke="#c2c2c2" /></Icon>
      </button>
      <div className="flex h-3 w-[383px] border-x border-[#c4c4c4] px-[2px]">
        {filterGlyphs.map(([label, glyph]) => (
          <button key={label} aria-label={label} className="flex flex-1 items-center justify-center">
            <Icon>
              {glyph}
              <path d="M20 19h14l-5 6v9h-4v-9z" fill={BLUE} stroke="#f7f7f7" strokeWidth="1" />
            </Icon>
          </button>
        ))}
      </div>
    </div>
  );
}

function StatusBar() {
  return (
    <footer className="flex h-[10px] shrink-0 items-center bg-[#f3f3f3] text-black">
      <span className="flex-1 whitespace-nowrap">SOLIDWORKS Premium 2016 x64 版</span>
      <span className="border-r border-[#ccc] pr-1">完全定义</span>
      <span className="w-[50px] border-r border-[#ccc] text-center whitespace-nowrap">在编辑 装配体</span>
      <span className="h-2 w-2 border-r border-[#ccc]" />
      <button className="flex items-center gap-2 pl-4">自定义<Caret className="rotate-180" /></button>
      <span className="flex w-11 justify-end pr-[2px]">
        <Icon className="size-[9px]"><path d="M4 12l10-7 18 6-2 12-10 9L6 24zM12 14l12 4M12 20l9 4" fill="#ccc" /></Icon>
      </span>
    </footer>
  );
}

export default function App() {
  return (
    <div className="flex h-screen flex-col overflow-hidden bg-[#f7f7f7] font-['Roboto','Noto_Sans_CJK_SC',sans-serif] text-[7px] leading-[8px] text-[#222]">
      <TitleBar />
      <Ribbon />
      <Viewports />
      <SheetTabs />
      <FilterToolbar />
      <StatusBar />
    </div>
  );
}
